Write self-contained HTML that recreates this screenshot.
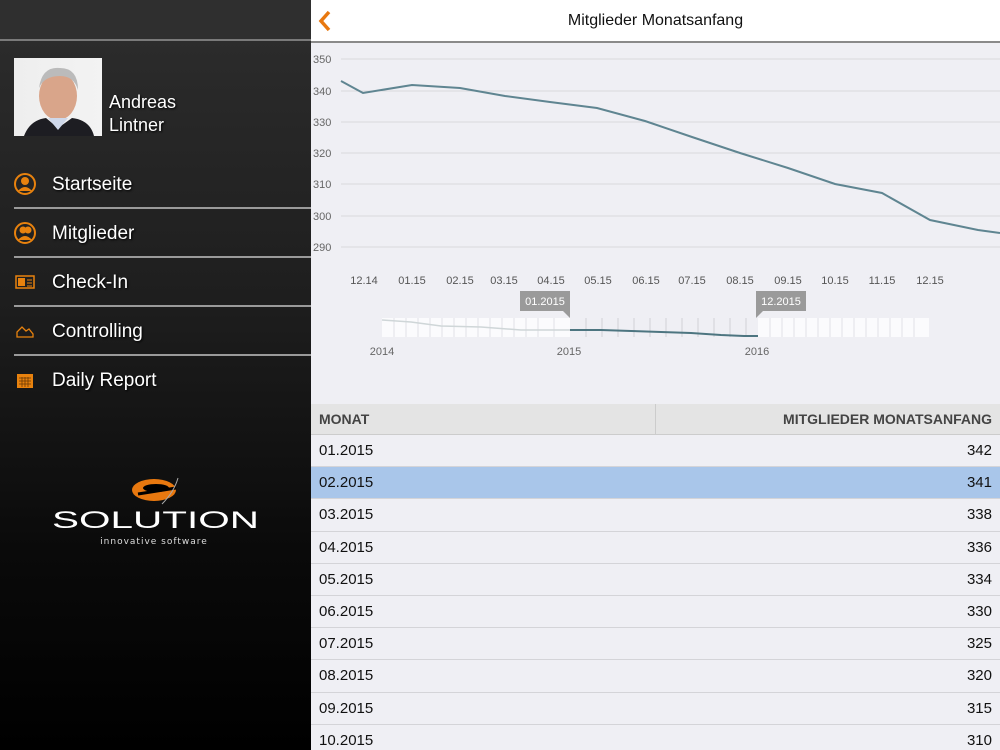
<!DOCTYPE html>
<html><head><meta charset="utf-8"><style>
*{margin:0;padding:0;box-sizing:border-box}
html,body{width:1000px;height:750px;overflow:hidden}
body{font-family:"Liberation Sans",sans-serif;position:relative;background:#efeff4}
#side{position:absolute;left:0;top:0;width:311px;height:750px;background:linear-gradient(#303030 0,#2a2a2a 60px,#1e1e1e 300px,#0a0a0a 550px,#000 750px)}
#side .top{height:41px;border-bottom:2px solid #7a7a7a;background:#2f2f2f}
.photo{position:absolute;left:14px;top:58px;width:88px;height:78px;background:linear-gradient(90deg,#eee 0,#f3f3f3 100%)}
.name{position:absolute;left:109px;top:91px;color:#fff;font-size:18px;line-height:23px;text-shadow:1px 1px 2px #000}
.item{position:absolute;left:14px;width:297px;height:49px;border-bottom:2px solid #9a9a9a;color:#fff;font-size:19px;text-shadow:1px 1px 2px #000}
.item span{position:absolute;left:38px;top:14px}
.item svg{position:absolute;left:0;top:13px}
#main{position:absolute;left:311px;top:0;width:689px;height:750px;background:#efeff4;overflow:hidden}
#hdr{height:43px;background:#fff;border-bottom:2px solid #8a8a8a;text-align:center;font-size:16px;line-height:42px;color:#111}
.rows div{height:32.2px;border-bottom:1px solid #d4d4d8;font-size:15px;line-height:32px;padding:0 8px;display:flex;justify-content:space-between;color:#111}
</style></head><body>
<div id="side"><div class="top"></div>
<div class="photo"><svg width="88" height="78"><ellipse cx="44" cy="38" rx="19" ry="24" fill="#d9a58a"/><path d="M25 30 Q28 8 46 10 Q64 10 64 32 Q60 18 46 18 Q30 18 25 30Z" fill="#bbb"/><path d="M10 78 Q16 62 32 60 L44 70 L58 60 Q76 62 80 78Z" fill="#1d1d22"/><path d="M34 60 L44 72 L54 60Z" fill="#cfd8ea"/></svg></div>
<div class="name">Andreas<br>Lintner</div>
<div class="item" style="top:160px"><svg width="24" height="24"><circle cx="11" cy="11" r="10" fill="none" stroke="#e8820e" stroke-width="2"/><circle cx="11" cy="8" r="4" fill="#e8820e"/><path d="M4 18 Q11 10 18 18Z" fill="#e8820e"/></svg><span>Startseite</span></div>
<div class="item" style="top:209px"><svg width="24" height="24"><circle cx="11" cy="11" r="10" fill="none" stroke="#e8820e" stroke-width="2"/><circle cx="9" cy="8" r="3.5" fill="#e8820e"/><circle cx="14" cy="8" r="3.5" fill="#e8820e"/><path d="M4 18 Q11 10 18 18Z" fill="#e8820e"/></svg><span>Mitglieder</span></div>
<div class="item" style="top:258px"><svg width="24" height="24"><rect x="2" y="5" width="18" height="12" fill="none" stroke="#e8820e" stroke-width="1.5"/><rect x="4" y="7" width="7" height="8" fill="#e8820e"/><path d="M13 9h5M13 12h5M13 15h5" stroke="#e8820e"/></svg><span>Check-In</span></div>
<div class="item" style="top:307px"><svg width="24" height="24"><path d="M3 17 L3 12 L8 7 L12 11 L15 9 L19 14 L19 17Z" fill="none" stroke="#e8820e" stroke-width="1.3"/></svg><span>Controlling</span></div>
<div class="item" style="top:356px;border:none"><svg width="24" height="24"><rect x="3" y="5" width="16" height="14" fill="#e8820e"/><path d="M5 9h12M5 12h12M5 15h12M8 8v10M11 8v10M14 8v10" stroke="#6a3a05" stroke-width="0.8"/></svg><span>Daily Report</span></div>
<svg style="position:absolute;left:40px;top:470px" width="240" height="80"><ellipse cx="114" cy="20" rx="22" ry="11" fill="#e8780f"/><ellipse cx="116" cy="18" rx="13" ry="4" fill="#000"/><path d="M98 24 L136 18" stroke="#000" stroke-width="3"/><path d="M122 34 Q134 22 138 8" stroke="#aaa" stroke-width="1" fill="none"/><text x="12" y="58" textLength="207" lengthAdjust="spacingAndGlyphs" fill="#fff" font-family="Liberation Sans" font-size="24">SOLUTION</text><text x="114" y="74" text-anchor="middle" fill="#ddd" font-family="DejaVu Sans" font-size="9" letter-spacing="1">innovative software</text></svg>
</div>
<div id="main"><div id="hdr">Mitglieder Monatsanfang<svg style="position:absolute;left:6px;top:10px" width="16" height="22"><path d="M12 2 L4 11 L12 20" stroke="#e8780f" stroke-width="3.5" fill="none"/></svg></div>
<svg style="position:absolute;left:0;top:0" width="689" height="404">
<g stroke="#d8d8dc" stroke-width="1"><line x1="30" x2="689" y1="59" y2="59"/><line x1="30" x2="689" y1="91" y2="91"/><line x1="30" x2="689" y1="122" y2="122"/><line x1="30" x2="689" y1="153" y2="153"/><line x1="30" x2="689" y1="184" y2="184"/><line x1="30" x2="689" y1="216" y2="216"/><line x1="30" x2="689" y1="247" y2="247"/></g>
<g font-size="11" fill="#666"><text x="2" y="63">350</text><text x="2" y="95">340</text><text x="2" y="126">330</text><text x="2" y="157">320</text><text x="2" y="188">310</text><text x="2" y="220">300</text><text x="2" y="251">290</text></g>
<polyline fill="none" stroke="#5f8591" stroke-width="2" points="30,81 52,93 101,85 149,88 194,96 239,102 286,108 334,121 381,137 429,153 477,168 524,184 571,193 619,220 667,230 689,233"/>
<g font-size="11" fill="#555" text-anchor="middle"><text x="53" y="284">12.14</text><text x="101" y="284">01.15</text><text x="149" y="284">02.15</text><text x="193" y="284">03.15</text><text x="240" y="284">04.15</text><text x="287" y="284">05.15</text><text x="335" y="284">06.15</text><text x="381" y="284">07.15</text><text x="429" y="284">08.15</text><text x="477" y="284">09.15</text><text x="524" y="284">10.15</text><text x="571" y="284">11.15</text><text x="619" y="284">12.15</text></g>
<rect x="71" y="318" width="547" height="19" fill="#fbfbfd"/>
<rect x="259" y="318" width="188" height="19" fill="#efeff4"/>
<g stroke="#e2e2e6"><line x1="83" x2="83" y1="318" y2="337"/><line x1="95" x2="95" y1="318" y2="337"/><line x1="107" x2="107" y1="318" y2="337"/><line x1="119" x2="119" y1="318" y2="337"/><line x1="131" x2="131" y1="318" y2="337"/><line x1="143" x2="143" y1="318" y2="337"/><line x1="155" x2="155" y1="318" y2="337"/><line x1="167" x2="167" y1="318" y2="337"/><line x1="179" x2="179" y1="318" y2="337"/><line x1="191" x2="191" y1="318" y2="337"/><line x1="203" x2="203" y1="318" y2="337"/><line x1="215" x2="215" y1="318" y2="337"/><line x1="227" x2="227" y1="318" y2="337"/><line x1="243" x2="243" y1="318" y2="337"/><line x1="459" x2="459" y1="318" y2="337"/><line x1="471" x2="471" y1="318" y2="337"/><line x1="483" x2="483" y1="318" y2="337"/><line x1="495" x2="495" y1="318" y2="337"/><line x1="507" x2="507" y1="318" y2="337"/><line x1="519" x2="519" y1="318" y2="337"/><line x1="531" x2="531" y1="318" y2="337"/><line x1="543" x2="543" y1="318" y2="337"/><line x1="555" x2="555" y1="318" y2="337"/><line x1="567" x2="567" y1="318" y2="337"/><line x1="579" x2="579" y1="318" y2="337"/><line x1="591" x2="591" y1="318" y2="337"/><line x1="603" x2="603" y1="318" y2="337"/></g>
<g stroke="#d0d0d6"><line x1="275" x2="275" y1="318" y2="337"/><line x1="291" x2="291" y1="318" y2="337"/><line x1="307" x2="307" y1="318" y2="337"/><line x1="323" x2="323" y1="318" y2="337"/><line x1="339" x2="339" y1="318" y2="337"/><line x1="355" x2="355" y1="318" y2="337"/><line x1="371" x2="371" y1="318" y2="337"/><line x1="387" x2="387" y1="318" y2="337"/><line x1="403" x2="403" y1="318" y2="337"/><line x1="419" x2="419" y1="318" y2="337"/><line x1="435" x2="435" y1="318" y2="337"/></g>
<polyline fill="none" stroke="#cfd6d8" stroke-width="1.5" points="71,320 100,322 130,326 170,327 210,330 259,330"/>
<polyline fill="none" stroke="#4d7580" stroke-width="2" points="259,330 290,330 320,331 350,332 380,333 410,335 433,336 447,336"/>
<rect x="209" y="291" width="50" height="20" fill="#9a9a9a"/><path d="M252 311 L259 311 L259 318Z" fill="#9a9a9a"/><text x="234" y="305" font-size="11" fill="#fff" text-anchor="middle">01.2015</text>
<rect x="445" y="291" width="50" height="20" fill="#9a9a9a"/><path d="M445 311 L452 311 L445 318Z" fill="#9a9a9a"/><text x="470" y="305" font-size="11" fill="#fff" text-anchor="middle">12.2015</text>
<g font-size="11" fill="#666" text-anchor="middle"><text x="71" y="355">2014</text><text x="258" y="355">2015</text><text x="446" y="355">2016</text></g>
</svg>
<div style="position:absolute;top:404px;left:0;width:689px;height:31px;background:#e4e4e4;border-bottom:1px solid #ccc;font-weight:bold;font-size:14px;color:#444;line-height:31px"><span style="position:absolute;left:8px">MONAT</span><span style="position:absolute;left:344px;top:0;height:31px;border-left:1px solid #ccc"></span><span style="position:absolute;right:8px">MITGLIEDER MONATSANFANG</span></div>
<div class="rows" style="position:absolute;top:435px;left:0;width:689px">
<div><span>01.2015</span><span>342</span></div>
<div style="background:#a9c6ea"><span>02.2015</span><span>341</span></div>
<div><span>03.2015</span><span>338</span></div>
<div><span>04.2015</span><span>336</span></div>
<div><span>05.2015</span><span>334</span></div>
<div><span>06.2015</span><span>330</span></div>
<div><span>07.2015</span><span>325</span></div>
<div><span>08.2015</span><span>320</span></div>
<div><span>09.2015</span><span>315</span></div>
<div><span>10.2015</span><span>310</span></div>
</div>
</div>
</body></html>
